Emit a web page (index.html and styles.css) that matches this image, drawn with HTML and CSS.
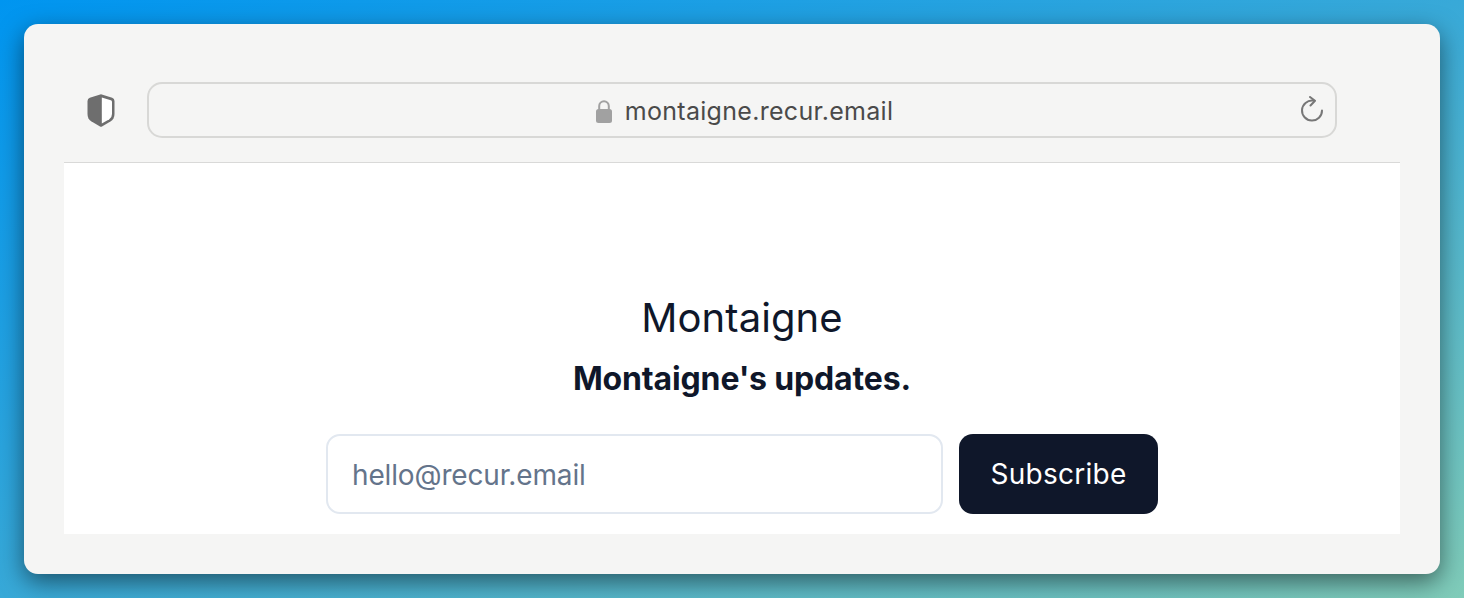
FILE: index.html
```html
<!DOCTYPE html>
<html lang="en">
<head>
    <meta charset="UTF-8">
    <meta name="viewport" content="width=device-width, initial-scale=1.0">
    <title>Montaigne</title>
    <link rel="stylesheet" href="styles.css">
</head>
<body>
    <div class="window">
        <div class="toolbar">
            <svg class="shield" width="28" height="33" viewBox="0 0 28 33">
                <path d="M14 0.3 L25.2 3.8 Q27.5 4.6 27.5 7 V20 Q27.5 24.8 23.8 27.3 L15 32.6 Q14 33.1 13 32.6 L4.2 27.3 Q0.5 24.8 0.5 20 V7 Q0.5 4.6 2.8 3.8 Z" fill="#6e6e6e"/>
                <path d="M14.8 3.4 L23.8 6.2 Q25 6.6 25 7.8 V20 Q25 23.5 22.3 25.2 L14.8 29.6 Z" fill="#fff"/>
            </svg>
            <div class="urlbar">
                <svg class="lock" width="16" height="24" viewBox="0 0 16 24">
                    <path d="M3.2 11 V7 a4.8 4.8 0 0 1 9.6 0 V11" fill="none" stroke="#a1a1a1" stroke-width="2"/>
                    <rect x="0" y="10" width="16" height="14" rx="2.5" fill="#a1a1a1"/>
                </svg>
                <span class="url">montaigne.recur.email</span>
                <svg class="reload" width="24" height="26" viewBox="0 0 24 26">
                    <path d="M13 4.6 A10 10 0 1 0 22 14.5" fill="none" stroke="#777" stroke-width="2" stroke-linecap="round"/>
                    <path d="M10 1 L15 4.8 L10.5 9.5" fill="none" stroke="#777" stroke-width="2" stroke-linecap="round" stroke-linejoin="round"/>
                </svg>
            </div>
        </div>
        <div class="page">
            <h1>Montaigne</h1>
            <h2>Montaigne's updates.</h2>
            <form class="signup">
                <input type="email" placeholder="hello@recur.email">
                <button type="button">Subscribe</button>
            </form>
        </div>
    </div>
</body>
</html>
```

FILE: styles.css
```css
html, body {
    height: 100%;
}

body {
    margin: 0;
    padding: 24px;
    box-sizing: border-box;
    overflow: hidden;
    font-family: Inter, "Noto Sans", sans-serif;
    background: linear-gradient(to bottom right, #0095f0 0%, #38a9d8 50%, #80ccb9 100%);
}

.window {
    height: 550px;
    padding: 0 40px 40px;
    box-sizing: border-box;
    display: flex;
    flex-direction: column;
    background-color: #f5f5f4;
    border-radius: 14px;
    box-shadow: 0 8px 24px rgba(0, 0, 0, 0.5);
}

.toolbar {
    height: 139px;
    padding: 58px 63px 24px 23px;
    box-sizing: border-box;
    display: flex;
    align-items: center;
    gap: 32px;
    border-bottom: 1px solid #d9d9d8;
}

.shield {
    flex: none;
}

.urlbar {
    flex: 1;
    height: 56px;
    padding: 1px 0 0 5px;
    box-sizing: border-box;
    position: relative;
    display: flex;
    align-items: center;
    justify-content: center;
    gap: 13px;
    border: 2px solid #d8d8d6;
    border-radius: 15px;
}

.url {
    font-size: 25px;
    letter-spacing: 0.3px;
    color: #4a4a4a;
}

.reload {
    position: absolute;
    right: 11px;
    top: 12px;
}

.page {
    flex: 1;
    padding: 131px 0 0 20px;
    display: flex;
    flex-direction: column;
    align-items: center;
    background-color: #fff;
    color: #0f172a;
}

h1 {
    margin: 0;
    font-size: 40px;
    line-height: 48px;
    font-weight: 370;
    letter-spacing: 0.1px;
}

h2 {
    margin: 19px 0 0;
    font-size: 32px;
    line-height: 36px;
    font-weight: 700;
    letter-spacing: -0.15px;
}

.signup {
    margin-top: 37px;
    display: flex;
    gap: 16px;
}

input {
    width: 617px;
    height: 80px;
    padding: 2px 24px 0;
    box-sizing: border-box;
    font-family: inherit;
    font-size: 28px;
    letter-spacing: -0.15px;
    background-color: #fff;
    border: 2px solid #e2e8f0;
    border-radius: 14px;
}

input::placeholder {
    color: #64748b;
    opacity: 1;
}

button {
    width: 199px;
    height: 80px;
    font-family: inherit;
    font-size: 28px;
    font-weight: 400;
    letter-spacing: 0.25px;
    color: #fff;
    background-color: #0f172a;
    border: none;
    border-radius: 14px;
}
```
